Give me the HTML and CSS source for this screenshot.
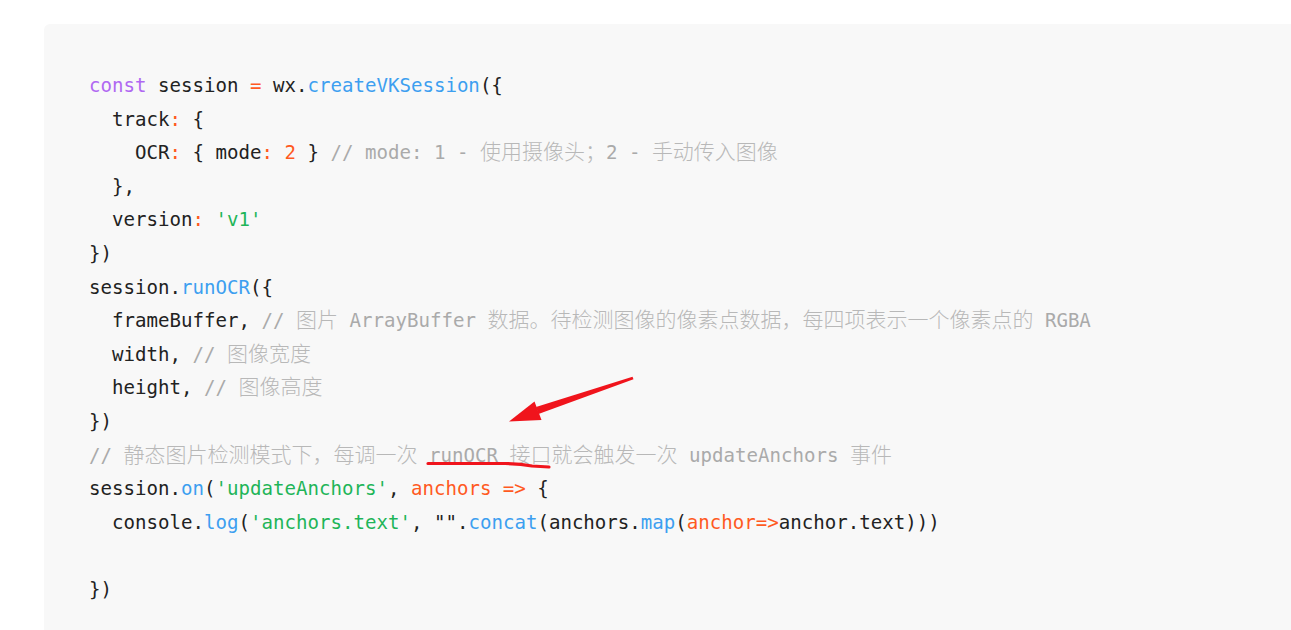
FILE: index.html
```html
<!DOCTYPE html>
<html lang="zh-CN">
<head>
    <meta charset="UTF-8">
    <meta name="viewport" content="width=device-width, initial-scale=1.0">
    <title>VKSession OCR</title>
    <link rel="stylesheet" href="styles.css">
</head>
<body>
    <div class="code-block">
<pre><code><span class="kw">const</span> session <span class="op">=</span> wx.<span class="fn">createVKSession</span>({
  track<span class="op">:</span> {
    OCR<span class="op">:</span> { mode<span class="op">:</span> <span class="num">2</span> } <span class="cm">// mode: 1 - <span class="zh">使用摄像头；</span>2 - <span class="zh">手动传入图像</span></span>
  },
  version<span class="op">:</span> <span class="str">'v1'</span>
})
session.<span class="fn">runOCR</span>({
  frameBuffer, <span class="cm">// <span class="zh">图片</span> ArrayBuffer <span class="zh">数据。待检测图像的像素点数据，每四项表示一个像素点的</span> RGBA</span>
  width, <span class="cm">// <span class="zh">图像宽度</span></span>
  height, <span class="cm">// <span class="zh">图像高度</span></span>
})
<span class="cm">// <span class="zh">静态图片检测模式下，每调一次</span> runOCR <span class="zh">接口就会触发一次</span> updateAnchors <span class="zh">事件</span></span>
session.<span class="fn">on</span>(<span class="str">'updateAnchors'</span>, <span class="param">anchors =&gt;</span> {
  console.<span class="fn">log</span>(<span class="str">'anchors.text'</span>, <span class="str-plain">""</span>.<span class="fn">concat</span>(anchors.<span class="fn">map</span>(<span class="param">anchor=&gt;</span>anchor.text)))

})</code></pre>
    </div>

    <!-- red hand-drawn annotation on top of the code -->
    <svg class="markup" width="1291" height="630" viewBox="0 0 1291 630">
        <polygon points="633.5,379.2 632.5,376.8 536,407 538.5,414" fill="#f0141c"/>
        <polygon points="509,421.5 534.5,401.5 541.5,420" fill="#f0141c"/>
        <path d="M428 463.5 L505 463.5 Q520 463.5 532 466 L549 467" stroke="#f0141c" stroke-width="3.2" fill="none" stroke-linecap="round"/>
    </svg>
</body>
</html>
```

FILE: styles.css
```css
* {
    box-sizing: border-box;
    margin: 0;
    padding: 0;
}

html, body {
    overflow: hidden;
}

body {
    background-color: #ffffff;
    height: 630px;
}

.code-block {
    margin: 24px 0 0 44px;
    padding: 45px 45px 0;
    background-color: #f8f8f8;
    border-radius: 6px 0 0 0;
    height: 606px;
}

pre {
    font-family: "DejaVu Sans Mono", monospace;
    font-size: 19.1px;
    line-height: 33.6px;
    color: #222222;
}

pre code {
    font: inherit;
}

.zh {
    font-family: "Noto Sans CJK SC", sans-serif;
    font-size: 21px;
    font-weight: 300;
    line-height: 20px;
}

.kw {
    color: #b068f2;
}

.op {
    color: #ff5a1f;
}

.num {
    color: #ff5a1f;
}

.fn {
    color: #3d9ff0;
}

.str {
    color: #1fb559;
}

.str-plain {
    color: #222222;
}

.param {
    color: #ff5a1f;
}

.cm {
    color: #aaaaaa;
}

.cm .zh {
    color: #b8b8b8;
}

.markup {
    position: absolute;
    top: 0;
    left: 0;
    pointer-events: none;
}
```
